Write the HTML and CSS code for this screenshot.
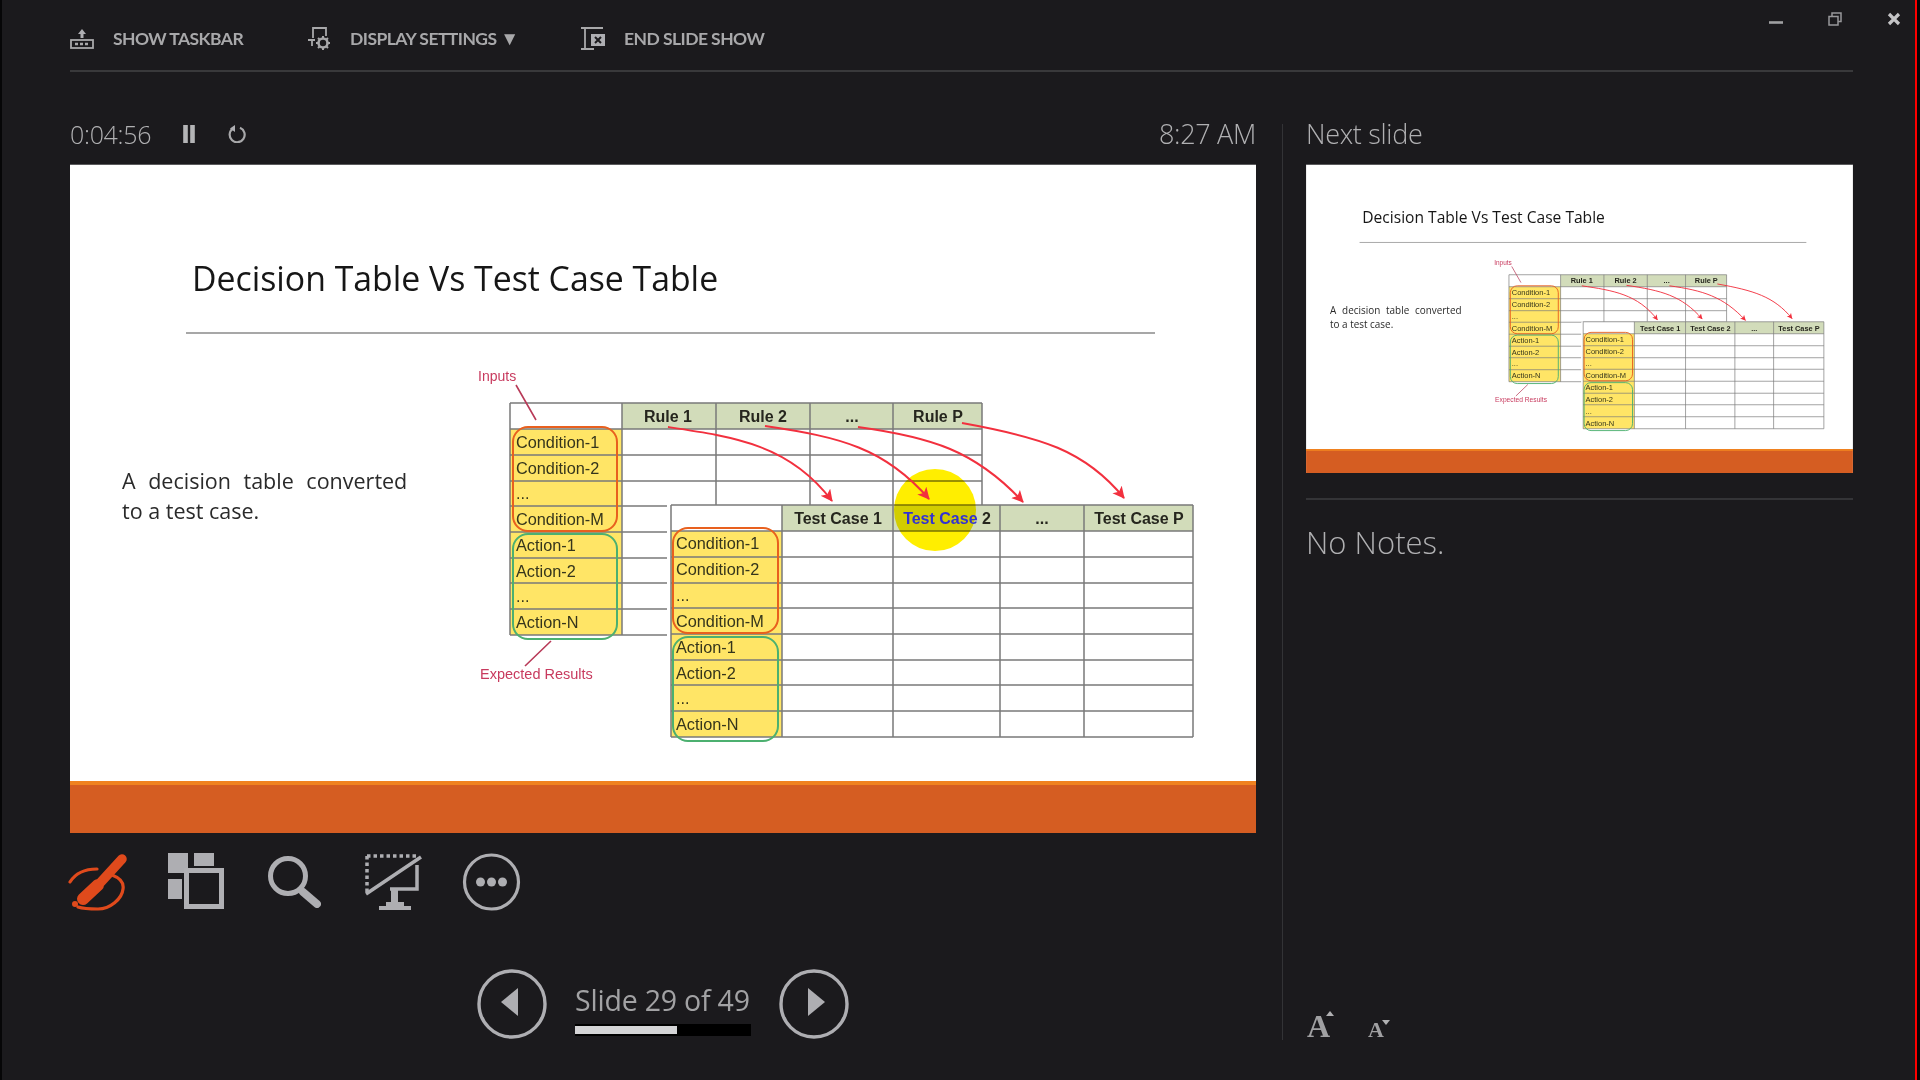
FILE: index.html
```html
<!DOCTYPE html>
<html lang="en">
<head>
<meta charset="utf-8">
<title>Presenter View</title>
<link rel="stylesheet" href="styles.css">
</head>
<body>
<div class="app">
  <header class="topbar">
    <div class="top-item top-item-a">
      <svg class="top-icon" viewBox="0 0 24 24"><path class="ic-fill" d="M12 3L8 8H10.5V12H13.5V8H16Z"/><rect class="ic-line" x="1" y="14" width="22" height="8"/><path class="ic-dash" d="M5 18H19"/></svg>
      <span>SHOW TASKBAR</span>
    </div>
    <div class="top-item top-item-b">
      <svg class="top-icon" viewBox="0 0 24 24"><path class="ic-line" d="M6 12V2H19V10M1 14H8M5 14V20"/><circle class="ic-gear" cx="16" cy="17" r="4.5"/><path class="ic-teeth" d="M16 10V12.5M16 21.5V24M9 17H11.5M20.5 17H23M11 12L12.8 13.8M19.2 20.2L21 22M21 12L19.2 13.8M12.8 20.2L11 22"/></svg>
      <span>DISPLAY SETTINGS <span class="caret">▼</span></span>
    </div>
    <div class="top-item">
      <svg class="top-icon" viewBox="0 0 24 24"><path class="ic-line" d="M0 2H22M4 2V22M0 23H13"/><rect class="ic-fill" x="10" y="8" width="14" height="12"/><path class="ic-x" d="M14 11L20 17M20 11L14 17"/></svg>
      <span>END SLIDE SHOW</span>
    </div>
    <div class="win-controls">
      <svg class="win-icon" viewBox="0 0 14 14"><path class="win-min" d="M0 10.5H14"/></svg>
      <svg class="win-icon" viewBox="0 0 14 14"><path class="win-thin" d="M1 4.5H10V13H1ZM4 4V1H13V9.5H10.5"/></svg>
      <svg class="win-icon" viewBox="0 0 14 14"><path class="win-close" d="M2 2L12 12M12 2L2 12"/></svg>
    </div>
  </header>

  <main class="body-row">
    <section class="left-col">
      <div class="head-row">
        <span class="light-text">0:04:56</span>
        <svg class="timer-icon timer-pause" viewBox="0 0 14 18"><path class="pause-bars" d="M3.5 0V18M10.5 0V18"/></svg>
        <svg class="timer-icon timer-reload" viewBox="0 0 18 18"><path class="reload" d="M5 3.5A7.5 7.5 0 1 0 12 2.8"/><path class="ic-fill" d="M7 0V7L2 3.5Z"/></svg>
        <span class="light-text light-large clock">8:27 AM</span>
      </div>
      <svg class="slide slide-main" viewBox="70 165 1186 668">
        <defs>
          <marker id="head" markerUnits="userSpaceOnUse" markerWidth="14" markerHeight="14" refX="11" refY="6" orient="auto">
            <path class="arrow-head" d="M0 0L12 6L0 12L3 6Z"/>
          </marker>
        </defs>
        <g id="slide-art">
          <rect class="s-white" x="70" y="165" width="1186" height="668"/>
          <rect class="s-orange" x="70" y="781" width="1186" height="52"/>
          <rect class="s-orange-top" x="70" y="781" width="1186" height="4"/>
          <text class="s-title" x="192" y="290.5">Decision Table Vs Test Case Table</text>
          <path class="s-rule" d="M186 333H1155"/>
          <text class="s-body s-body-just" x="122" y="489">A decision table converted</text>
          <text class="s-body" x="122" y="519">to a test case.</text>

          <rect class="t-head" x="622" y="403" width="360" height="26"/>
          <rect class="t-side" x="510" y="429" width="112" height="206"/>
          <path class="t-line" d="M510 403H982M510 429H982M510 455H982M510 481H982M510 506H982M510 532H667M510 558H667M510 583H667M510 609H667M510 635H667M510 403V635M622 403V635M716 403V506M810 403V506M893 403V506M982 403V506"/>
          <rect class="s-white" x="667" y="505" width="526" height="232"/>
          <rect class="t-head" x="782" y="505" width="411" height="26"/>
          <rect class="t-side" x="671" y="531" width="111" height="206"/>
          <path class="t-line" d="M671 505H1193M671 531H1193M671 557H1193M671 583H1193M671 608H1193M671 634H1193M671 660H1193M671 685H1193M671 711H1193M671 737H1193M671 505V737M782 505V737M893 505V737M1000 505V737M1084 505V737M1193 505V737"/>
          <circle class="spot" cx="935" cy="510" r="41"/>

          <text class="t-th" x="668" y="422">Rule 1</text>
          <text class="t-th" x="763" y="422">Rule 2</text>
          <text class="t-th" x="852" y="422">...</text>
          <text class="t-th" x="938" y="422">Rule P</text>
          <text class="t-th" x="838" y="524">Test Case 1</text>
          <text class="t-th" x="947" y="524"><tspan class="t-hl">Test Case</tspan> 2</text>
          <text class="t-th" x="1042" y="524">...</text>
          <text class="t-th" x="1139" y="524">Test Case P</text>

          <text class="t-td" x="516" y="447.5">Condition-1</text>
          <text class="t-td" x="516" y="473.5">Condition-2</text>
          <text class="t-td" x="516" y="499">...</text>
          <text class="t-td" x="516" y="524.5">Condition-M</text>
          <text class="t-td" x="516" y="550.5">Action-1</text>
          <text class="t-td" x="516" y="576.5">Action-2</text>
          <text class="t-td" x="516" y="602">...</text>
          <text class="t-td" x="516" y="627.5">Action-N</text>
          <text class="t-td" x="676" y="549">Condition-1</text>
          <text class="t-td" x="676" y="575">Condition-2</text>
          <text class="t-td" x="676" y="601">...</text>
          <text class="t-td" x="676" y="627">Condition-M</text>
          <text class="t-td" x="676" y="653">Action-1</text>
          <text class="t-td" x="676" y="679">Action-2</text>
          <text class="t-td" x="676" y="704">...</text>
          <text class="t-td" x="676" y="730">Action-N</text>

          <rect class="o-orange" x="513" y="427" width="104" height="104" rx="15"/>
          <rect class="o-green" x="513" y="534" width="104" height="105" rx="15"/>
          <rect class="o-orange" x="673" y="528" width="105" height="105" rx="15"/>
          <rect class="o-green" x="673" y="637" width="105" height="104" rx="15"/>

          <text class="s-note" x="478" y="381">Inputs</text>
          <text class="s-note s-note-wide" x="480" y="679">Expected Results</text>
          <path class="note-line" d="M516 385L536 420M525 666L551 641"/>

          <path class="arrow" marker-end="url(#head)" d="M668 427C735 437 790 445 832 501"/>
          <path class="arrow" marker-end="url(#head)" d="M765 426C840 437 885 448 929 499"/>
          <path class="arrow" marker-end="url(#head)" d="M858 427C930 437 975 450 1023 502"/>
          <path class="arrow" marker-end="url(#head)" d="M962 423C1040 437 1085 450 1124 498"/>
        </g>
      </svg>

      <div class="tools">
        <svg class="tool" viewBox="0 0 60 60">
          <path class="pen-ring" d="M2 30C7 22 16 17 29 17M44 23C52 26 56 31 55 37C54 47 42 57 30 57C23 57 16 57 10 55"/>
          <path class="pen-top" d="M54 7L33 30"/>
          <path class="pen-body" d="M30 33L15 47"/>
          <circle class="pen-tip" cx="7" cy="52" r="3"/>
        </svg>
        <svg class="tool" viewBox="0 0 60 60">
          <path class="ic-fill" d="M1 1H21V21H1ZM27 1H47V14H27ZM1 27H15V47H1Z"/>
          <rect class="big-square" x="19.5" y="18.5" width="35" height="36"/>
        </svg>
        <svg class="tool" viewBox="0 0 60 60">
          <circle class="mag-ring" cx="23" cy="24" r="17.5"/>
          <path class="mag-handle" d="M38 40L52 52"/>
        </svg>
        <svg class="tool" viewBox="0 0 60 60">
          <path class="mon-dots" d="M3 4H55M3 4V41"/>
          <path class="mon-line" d="M2 42L57 5M53 13V37H26"/>
          <path class="ic-fill" d="M27 37H34V53H27ZM15 54H47V58H15ZM22 50H40V54H22Z"/>
        </svg>
        <svg class="tool" viewBox="0 0 60 60">
          <circle class="more-ring" cx="29.5" cy="30" r="27"/>
          <circle class="ic-fill" cx="18.5" cy="30" r="4.5"/>
          <circle class="ic-fill" cx="29.5" cy="30" r="4.5"/>
          <circle class="ic-fill" cx="40.5" cy="30" r="4.5"/>
        </svg>
      </div>

      <nav class="slide-nav">
        <svg class="nav-btn" viewBox="0 0 70 70"><circle class="nav-ring" cx="35" cy="35" r="33"/><path class="ic-fill" d="M41 19V47L24 33Z"/></svg>
        <div class="nav-mid">
          <div class="nav-text">Slide 29 of 49</div>
          <div class="nav-track"><div class="nav-fill"></div></div>
        </div>
        <svg class="nav-btn" viewBox="0 0 70 70"><circle class="nav-ring" cx="35" cy="35" r="33"/><path class="ic-fill" d="M29 19V47L46 33Z"/></svg>
      </nav>
    </section>

    <div class="divider"></div>

    <aside class="right-col">
      <div class="head-row"><span class="light-text light-large">Next slide</span></div>
      <svg class="slide slide-thumb" viewBox="70 165 1186 668"><use href="#slide-art"/></svg>
      <div class="notes">No Notes.</div>
      <div class="font-tools">
        <span class="font-btn font-up">A</span>
        <span class="font-btn font-down">A</span>
      </div>
    </aside>
  </main>
  <div class="edge-line"></div>
</div>
</body>
</html>
```

FILE: styles.css
```css
* { box-sizing: border-box; }
html, body { margin: 0; height: 100%; }
body { background: #050506; overflow: hidden; font-family: "Open Sans", "Liberation Sans", sans-serif; color: #a6a6a8; }

.app {
  position: relative;
  width: 1920px; height: 1080px;
  background: #1b1a1d;
  border-left: 2px solid #060607;
  border-right: 3px solid #050506;
  padding: 0 64px 0 68px;
  display: flex; flex-direction: column;
}
.edge-line { position: absolute; top: 0; bottom: 0; right: 0; width: 2.5px; background: #ff0000; }

/* top bar */
.topbar {
  height: 72px; flex: none;
  display: flex; align-items: flex-start;
  border-bottom: 2px solid #39393b;
  filter: blur(0.4px);
}
.top-item {
  display: flex; align-items: center; gap: 19px;
  height: 24px; margin-top: 26px;
  font-family: Lato, "Open Sans", sans-serif;
  font-weight: 700; font-size: 17.5px; color: #a8a8aa;
  letter-spacing: -0.55px;
  white-space: nowrap;
}
.top-item-a { width: 237px; }
.top-item-b { width: 274px; }
.caret { font-size: 19px; letter-spacing: 0; line-height: 1; }
.top-icon { width: 24px; height: 24px; flex: none; }
.ic-fill { fill: #aeaeb2; }
.ic-line { fill: none; stroke: #a8a8aa; stroke-width: 1.8; }
.ic-dash { fill: none; stroke: #a8a8aa; stroke-width: 2.4; stroke-dasharray: 3 2; }
.ic-gear { fill: none; stroke: #a8a8aa; stroke-width: 2.6; }
.ic-teeth { fill: none; stroke: #a8a8aa; stroke-width: 2; }
.ic-x { fill: none; stroke: #1b1a1d; stroke-width: 2; }

.win-controls {
  margin-left: auto; margin-right: -48px; margin-top: 12px;
  display: flex; gap: 45px;
}
.win-icon { width: 14px; height: 14px; }
.win-min { fill: none; stroke: #a0a0a2; stroke-width: 2.6; }
.win-thin { fill: none; stroke: #98989a; stroke-width: 1.5; }
.win-close { fill: none; stroke: #c4c4c6; stroke-width: 3.2; }

/* layout */
.body-row { flex: 1; display: flex; min-height: 0; }
.left-col { width: 1186px; flex: none; display: flex; flex-direction: column; }
.divider { width: 1px; margin: 52px 23px 40px 26px; background: #333336; flex: none; }
.right-col { width: 547px; flex: none; display: flex; flex-direction: column; }

.head-row {
  height: 93px; flex: none;
  display: flex; align-items: center;
  padding-top: 43px; padding-bottom: 13px;
}
.light-text {
  font-weight: 300; font-size: 25px; line-height: 36px;
  color: #b0b0b2; letter-spacing: -0.3px;
  filter: blur(0.3px);
}
.light-large { font-size: 27px; }
.clock { margin-left: auto; }
.timer-icon { flex: none; height: 18px; }
.timer-pause { width: 14px; margin-left: 31px; }
.timer-reload { width: 18px; margin-left: 32px; }
.pause-bars { fill: none; stroke: #b4b4b6; stroke-width: 4.6; }
.reload { fill: none; stroke: #a8a8aa; stroke-width: 2.2; }

/* slides */
.slide { display: block; flex: none; filter: blur(0.65px); box-shadow: 0 -1px 0 #5a5a5c; }
.slide-main { width: 1186px; height: 668px; --spot: #ffee00; --hl: #3232d2; }
.slide-thumb { width: 547px; height: 308px; --spot: transparent; --hl: #26261e; }

.s-white { fill: #fff; }
.s-orange { fill: #d55d22; }
.s-orange-top { fill: #f08220; }
.s-title { font-family: "Open Sans", sans-serif; font-size: 33.8px; fill: #161616; }
.s-rule { stroke: #8a8a8a; stroke-width: 1.6; fill: none; }
.s-body { font-family: "Open Sans", sans-serif; font-size: 21.5px; fill: #2a2a2a; }
.s-body-just { word-spacing: 7px; }
.t-head { fill: #d2dcba; }
.t-side { fill: #ffe566; }
.t-line { fill: none; stroke: #7a7a7a; stroke-width: 1.5; }
.spot { fill: var(--spot); mix-blend-mode: multiply; }
.t-th { font-family: "Liberation Sans", sans-serif; font-weight: 700; font-size: 16px; text-anchor: middle; fill: #26261e; }
.t-hl { fill: var(--hl); }
.t-td { font-family: "Liberation Sans", sans-serif; font-size: 16.3px; fill: #35351c; }
.o-orange { fill: none; stroke: #e8601e; stroke-width: 2; }
.o-green { fill: none; stroke: #4cb070; stroke-width: 2; }
.s-note { font-family: "Liberation Sans", sans-serif; font-size: 14px; fill: #c83a5e; }
.s-note-wide { font-size: 14.5px; }
.note-line { fill: none; stroke: #b83a58; stroke-width: 1.6; }
.arrow { fill: none; stroke: #f2303e; stroke-width: 2; }
.arrow-head { fill: #f2303e; }

/* tools */
.tools { display: flex; gap: 38.5px; margin: 19px 0 0 -2px; flex: none; }
.tool { width: 60px; height: 60px; flex: none; filter: blur(0.3px); }
.pen-ring { fill: none; stroke: #e04a1c; stroke-width: 3.2; stroke-linecap: round; }
.pen-top { fill: none; stroke: #e04a1c; stroke-width: 9.5; stroke-linecap: round; }
.pen-body { fill: none; stroke: #e04a1c; stroke-width: 12; stroke-linecap: round; }
.pen-tip { fill: #e04a1c; }
.big-square { fill: #1b1a1d; stroke: #b0b0b4; stroke-width: 5; }
.mag-ring { fill: none; stroke: #aeaeb2; stroke-width: 5; }
.mag-handle { fill: none; stroke: #aeaeb2; stroke-width: 8; stroke-linecap: round; }
.mon-dots { fill: none; stroke: #aeaeb2; stroke-width: 3.5; stroke-dasharray: 3.5 3; }
.mon-line { fill: none; stroke: #aeaeb2; stroke-width: 3.5; }
.more-ring { fill: none; stroke: #aeaeb2; stroke-width: 3.2; }

/* slide nav */
.slide-nav { display: flex; justify-content: center; align-items: flex-start; gap: 28px; margin-top: 57px; flex: none; }
.nav-btn { width: 70px; height: 70px; flex: none; filter: blur(0.3px); }
.nav-ring { fill: none; stroke: #aeaeb2; stroke-width: 3.4; }
.nav-mid { width: 176px; flex: none; }
.nav-text { font-size: 28.5px; line-height: 40px; margin-top: 11px; color: #a2a2a4; white-space: nowrap; letter-spacing: -0.2px; filter: blur(0.3px); }
.nav-track { height: 12px; margin-top: 4px; background: #000; padding: 2px 0; }
.nav-fill { width: 102px; height: 8px; background: #d4d4d6; }

/* notes */
.notes {
  margin-top: 25px; padding-top: 22px;
  border-top: 2px solid #343437;
  font-size: 31px; line-height: 40px; font-weight: 300; color: #b0b0b2;
  filter: blur(0.3px);
}
.font-tools { margin-top: auto; margin-bottom: 35px; display: flex; align-items: baseline; }
.font-btn { position: relative; width: 61px; padding-left: 1px; font-family: "Liberation Serif", serif; font-weight: 700; line-height: 30px; color: #a0a0a2; filter: blur(0.4px); }
.font-up { font-size: 32px; }
.font-down { font-size: 22px; }
.font-btn::after { content: ""; position: absolute; border-left: 4px solid transparent; border-right: 4px solid transparent; }
.font-up::after { left: 20px; top: 0; border-bottom: 5px solid #b0b0b2; }
.font-down::after { left: 15px; top: 5px; border-top: 5px solid #b0b0b2; }
```
